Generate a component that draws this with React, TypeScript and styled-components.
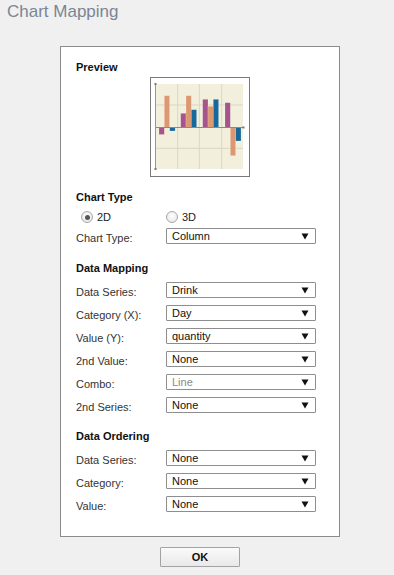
import styled, { createGlobalStyle } from "styled-components"

const GlobalStyle = createGlobalStyle`
    html, body {
        margin: 0;
        padding: 0;
        height: 100%;
        background: #f0f0f0;
        font-family: "Liberation Sans", Arial, sans-serif;
    }
`

type Bar = { x: number; top: number; bottom: number; color: string }

const PURPLE = "#a5558c"
const ORANGE = "#dc9872"
const BLUE = "#16699a"

const bars: Bar[] = [
    { x: 8, top: 49.5, bottom: 56.5, color: PURPLE },
    { x: 13.3, top: 17.7, bottom: 49.5, color: ORANGE },
    { x: 18.8, top: 49.5, bottom: 53, color: BLUE },
    { x: 29.7, top: 35.3, bottom: 49.5, color: PURPLE },
    { x: 35, top: 17.7, bottom: 49.5, color: ORANGE },
    { x: 40.3, top: 31.7, bottom: 49.5, color: BLUE },
    { x: 51.7, top: 21.3, bottom: 49.5, color: PURPLE },
    { x: 57, top: 28.3, bottom: 49.5, color: ORANGE },
    { x: 62.3, top: 21.3, bottom: 49.5, color: BLUE },
    { x: 74, top: 24.7, bottom: 49.5, color: PURPLE },
    { x: 79.3, top: 49.5, bottom: 77.7, color: ORANGE },
    { x: 84.7, top: 49.5, bottom: 63, color: BLUE },
]

function PreviewChart() {
    return (
        <svg width="98" height="98" viewBox="0 0 98 98">
            <rect x="4" y="6" width="88" height="85" fill="#f2f0dc" />
            {[26.7, 48.3, 70.7].map((x) => (
                <line key={x} x1={x} y1="6" x2={x} y2="91" stroke="#d9d7c3" strokeWidth="1" />
            ))}
            {[27, 70.3].map((y) => (
                <line key={y} x1="4" y1={y} x2="92" y2={y} stroke="#d9d7c3" strokeWidth="1" />
            ))}
            {bars.map((b, i) => (
                <rect
                    key={i}
                    x={b.x}
                    y={b.top}
                    width="5.3"
                    height={b.bottom - b.top}
                    fill={b.color}
                    stroke="#ffffff"
                    strokeOpacity="0.3"
                    strokeWidth="0.6"
                />
            ))}
            <line x1="4" y1="49.5" x2="93" y2="49.5" stroke="#8d8b7d" strokeWidth="1" />
            <line x1="4.5" y1="5" x2="4.5" y2="92" stroke="#9a988a" strokeWidth="1" />
            <rect x="3.5" y="5" width="2" height="2" fill="#777" />
            <rect x="3.5" y="90" width="2" height="2" fill="#777" />
            <rect x="91.5" y="48.5" width="2" height="2" fill="#777" />
        </svg>
    )
}

function Arrow() {
    return (
        <svg width="8" height="7" viewBox="0 0 8 7">
            <path d="M0.5 0.5 H7.5 L4 6.5 Z" fill="#111" />
        </svg>
    )
}

function Dropdown({ value, disabled }: { value: string; disabled?: boolean }) {
    return (
        <SelectBox>
            <SelectValue $disabled={disabled}>{value}</SelectValue>
            <Arrow />
        </SelectBox>
    )
}

function FieldRow({ label, value, disabled }: { label: string; value: string; disabled?: boolean }) {
    return (
        <Row>
            <Label>{label}</Label>
            <Dropdown value={value} disabled={disabled} />
        </Row>
    )
}

export default function App() {
    return (
        <Page>
            <GlobalStyle />
            <Title>Chart Mapping</Title>
            <Panel>
                <SectionTitle>Preview</SectionTitle>
                <PreviewFrame>
                    <PreviewChart />
                </PreviewFrame>

                <SectionTitle $gap={14}>Chart Type</SectionTitle>
                <RadioRow>
                    <RadioItem>
                        <Radio $checked />
                        <span>2D</span>
                    </RadioItem>
                    <RadioItem>
                        <Radio />
                        <span>3D</span>
                    </RadioItem>
                </RadioRow>
                <Rows $gap={4}>
                    <FieldRow label="Chart Type:" value="Column" />
                </Rows>

                <SectionTitle $gap={18}>Data Mapping</SectionTitle>
                <Rows $gap={7}>
                    <FieldRow label="Data Series:" value="Drink" />
                    <FieldRow label="Category (X):" value="Day" />
                    <FieldRow label="Value (Y):" value="quantity" />
                    <FieldRow label="2nd Value:" value="None" />
                    <FieldRow label="Combo:" value="Line" disabled />
                    <FieldRow label="2nd Series:" value="None" />
                </Rows>

                <SectionTitle $gap={17}>Data Ordering</SectionTitle>
                <Rows $gap={7}>
                    <FieldRow label="Data Series:" value="None" />
                    <FieldRow label="Category:" value="None" />
                    <FieldRow label="Value:" value="None" />
                </Rows>
            </Panel>
            <Footer>
                <OkButton>OK</OkButton>
            </Footer>
        </Page>
    )
}

const Page = styled.div`
    display: flex;
    flex-direction: column;
    min-height: 575px;
    background: #f0f0f0;
`

const Title = styled.div`
    padding: 2px 0 0 7px;
    font-size: 17px;
    line-height: 20px;
    color: #7b8596;
`

const Panel = styled.div`
    box-sizing: border-box;
    width: 280px;
    height: 491px;
    margin: 24px 0 0 60px;
    padding: 14px 23px 0 15px;
    border: 1px solid #8c8c8c;
    background: #ffffff;
    display: flex;
    flex-direction: column;
`

const SectionTitle = styled.div<{ $gap?: number }>`
    margin-top: ${(p) => p.$gap ?? 0}px;
    font-size: 11px;
    line-height: 13px;
    font-weight: bold;
    color: #111;
`

const PreviewFrame = styled.div`
    box-sizing: border-box;
    width: 100px;
    height: 100px;
    margin: 3px 0 0 74px;
    border: 1px solid #7a7a7a;
    background: #ffffff;
    display: flex;

    svg {
        display: block;
    }
`

const RadioRow = styled.div`
    margin-top: 6px;
    height: 14px;
    display: flex;
    align-items: center;
`

const RadioItem = styled.label`
    display: flex;
    align-items: center;
    gap: 4px;
    font-size: 11px;
    color: #222;

    &:first-child {
        margin-left: 5px;
        width: 85px;
    }
`

const Radio = styled.span<{ $checked?: boolean }>`
    box-sizing: border-box;
    width: 12px;
    height: 12px;
    border-radius: 50%;
    border: 1px solid #a8a8a8;
    background: radial-gradient(circle at 50% 40%, #ffffff, #e2e2e2);
    position: relative;

    &::after {
        content: "";
        display: ${(p) => (p.$checked ? "block" : "none")};
        position: absolute;
        left: 2.5px;
        top: 2.5px;
        width: 5px;
        height: 5px;
        border-radius: 50%;
        background: #555;
    }
`

const Rows = styled.div<{ $gap: number }>`
    margin-top: ${(p) => p.$gap}px;
    display: flex;
    flex-direction: column;
    gap: 7px;
`

const Row = styled.div`
    display: flex;
    align-items: center;
    height: 16px;
`

const Label = styled.div`
    width: 90px;
    font-size: 11px;
    color: #333;
    padding-top: 3px;
`

const SelectBox = styled.div`
    box-sizing: border-box;
    width: 150px;
    height: 16px;
    border: 1px solid #8e8e8e;
    border-radius: 1px;
    background: #ffffff;
    padding: 0 6px 0 5px;
    display: flex;
    align-items: center;
    justify-content: space-between;
`

const SelectValue = styled.span<{ $disabled?: boolean }>`
    font-size: 11px;
    line-height: 14px;
    color: ${(p) => (p.$disabled ? "#8a8a8a" : "#111")};
`

const Footer = styled.div`
    margin-top: 10px;
    padding-left: 160px;
`

const OkButton = styled.button`
    box-sizing: border-box;
    width: 80px;
    height: 20px;
    padding: 0;
    border: 1px solid #a3a3a3;
    border-radius: 1px;
    background: linear-gradient(#fafafa, #e9e9e9);
    font-family: "Liberation Sans", Arial, sans-serif;
    font-size: 11px;
    font-weight: bold;
    color: #111;
`
